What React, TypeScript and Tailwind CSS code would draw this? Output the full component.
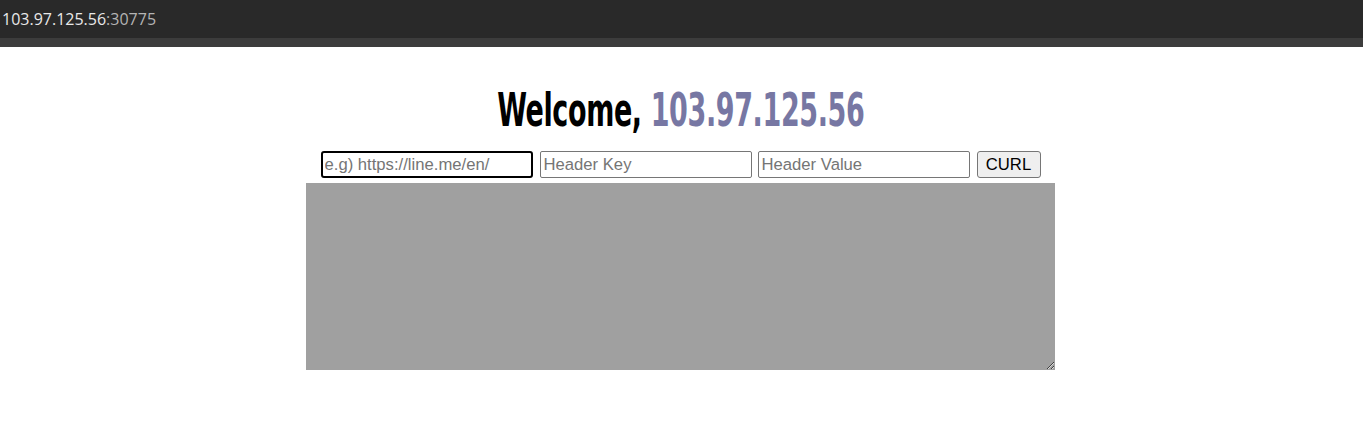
export default function App() {
  return (
    <div className="min-h-[435px] bg-white">
      <div className="flex h-[38px] items-center bg-[#292929] px-[2px] font-['Open_Sans','Liberation_Sans',sans-serif] text-[16px]">
        <span className="text-[#e8e8e8]">103.97.125.56</span>
        <span className="text-[#b4b4b4]">:30775</span>
      </div>
      <div className="h-[9px] bg-[#3c3c3c]" />

      <div className="flex flex-col items-center pr-[2px]">
        <h1 className="mt-[40px] mb-[18px] origin-center scale-x-[0.75] scale-y-[1.15] font-['Impact','DejaVu_Sans_Condensed',sans-serif] text-[40px] leading-[46px] font-bold tracking-[-0.5px] whitespace-nowrap">
          <span className="text-black">Welcome, </span>
          <span className="text-[#7777a3]">103.97.125.56</span>
        </h1>

        <div className="flex items-center font-['Liberation_Sans',Arial,sans-serif] text-[16.67px]">
          <input
            placeholder="e.g) https://line.me/en/"
            className="h-[27px] w-[212px] rounded-[3px] border-2 border-black px-[2px] outline-none placeholder:text-[#757575]"
          />
          <input
            placeholder="Header Key"
            className="ml-[7px] h-[27px] w-[212px] rounded-[2px] border border-[#767676] px-[3px] placeholder:text-[#757575]"
          />
          <input
            placeholder="Header Value"
            className="ml-[6px] h-[27px] w-[212px] rounded-[2px] border border-[#767676] px-[3px] placeholder:text-[#757575]"
          />
          <button className="ml-[7px] h-[27px] w-[64px] rounded-[3px] border border-[#767676] bg-[#efefef] text-black">
            CURL
          </button>
        </div>

        <textarea className="mt-[5px] h-[187px] w-[749px] bg-[#a0a0a0] outline-none" />
      </div>
    </div>
  );
}
